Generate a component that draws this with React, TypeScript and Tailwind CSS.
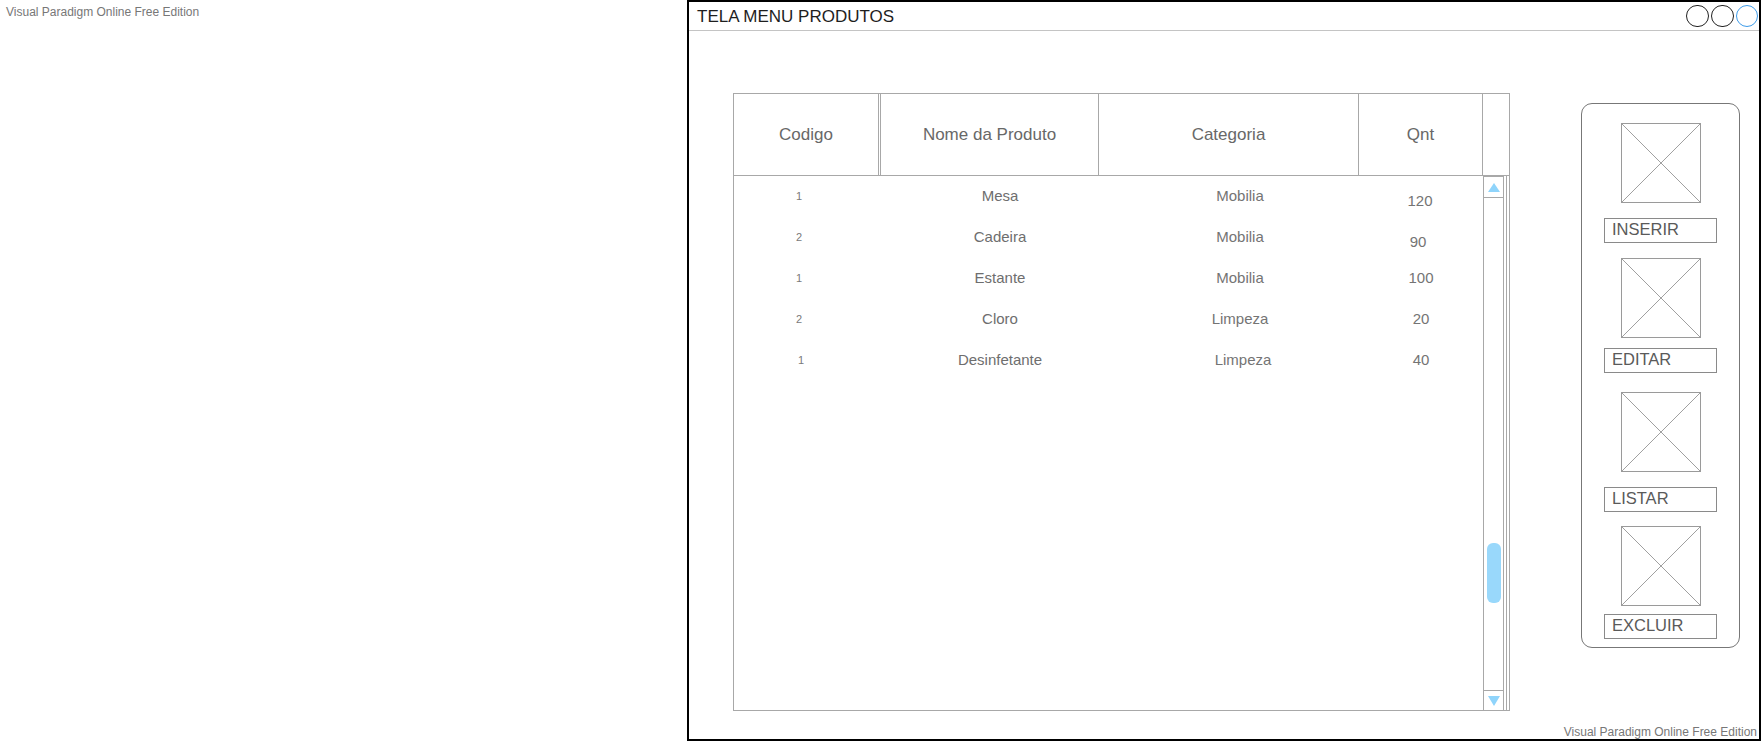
import React from "react";

type Row = {
  c: string;
  n: string;
  cat: string;
  q: string;
  qCls: string;
  cCls: string;
  catCls: string;
};

const rows: Row[] = [
  { c: "1", n: "Mesa", cat: "Mobilia", q: "120", qCls: "pt-[9px]", cCls: "", catCls: "" },
  { c: "2", n: "Cadeira", cat: "Mobilia", q: "90", qCls: "pt-[9px] pr-[4px]", cCls: "", catCls: "" },
  { c: "1", n: "Estante", cat: "Mobilia", q: "100", qCls: "pl-[2px]", cCls: "", catCls: "" },
  { c: "2", n: "Cloro", cat: "Limpeza", q: "20", qCls: "pl-[2px]", cCls: "", catCls: "" },
  { c: "1", n: "Desinfetante", cat: "Limpeza", q: "40", qCls: "pl-[2px]", cCls: "pl-[4px]", catCls: "pl-[6px]" },
];

function Placeholder() {
  return (
    <div className="w-[80px] h-[80px] border border-[#9a9a9a] shrink-0">
      <svg width="78" height="78" viewBox="0 0 78 78" className="block">
        <line x1="0" y1="0" x2="78" y2="78" stroke="#a0a0a0" strokeWidth="1" />
        <line x1="78" y1="0" x2="0" y2="78" stroke="#a0a0a0" strokeWidth="1" />
      </svg>
    </div>
  );
}

function Label({ text, cls }: { text: string; cls: string }) {
  return (
    <div
      className={`w-[113px] h-[25px] border border-[#8a8a8a] pl-[7px] pb-[2px] flex items-center text-[16.5px] leading-none text-[#5a5a5a] ${cls}`}
    >
      {text}
    </div>
  );
}

export default function App() {
  return (
    <div className="w-[1762px] h-[742px] bg-white flex overflow-hidden font-['Liberation_Sans',Arial,sans-serif]">
      <div className="w-[687px] shrink-0 pl-[6px] pt-[4px] text-[12px] leading-[16px] text-[#777]">
        Visual Paradigm Online Free Edition
      </div>

      <div className="w-[1074px] h-[741px] shrink-0 border-2 border-black flex flex-col">
        {/* title bar */}
        <div className="h-[29px] shrink-0 border-b border-[#c4c4c4] flex items-center pl-[8px] pr-[1px]">
          <span className="text-[17px] leading-none text-[#1e1e1e]">TELA MENU PRODUTOS</span>
          <div className="ml-auto flex gap-[2px]">
            <div className="w-[23px] h-[22px] rounded-full border-[1.5px] border-[#222]" />
            <div className="w-[23px] h-[22px] rounded-full border-[1.5px] border-[#222]" />
            <div className="w-[22px] h-[22px] rounded-full border-[1.5px] border-[#3d9be9]" />
          </div>
        </div>

        {/* body */}
        <div className="flex items-start pl-[44px] pt-[62px]">
          {/* table */}
          <div className="w-[777px] shrink-0 border border-[#a8a8a8] flex flex-col">
            <div className="h-[82px] border-b border-[#a8a8a8] flex text-[17px] text-[#686868]">
              <div className="w-[145px] border-r border-[#a8a8a8] flex items-center justify-center">Codigo</div>
              <div className="w-[1px]" />
              <div className="w-[219px] border-x border-[#a8a8a8] flex items-center justify-center">Nome da Produto</div>
              <div className="w-[260px] border-r border-[#a8a8a8] flex items-center justify-center">Categoria</div>
              <div className="w-[124px] border-r border-[#a8a8a8] flex items-center justify-center">Qnt</div>
              <div className="flex-1" />
            </div>

            <div className="h-[534px] flex">
              <div className="w-[749px] flex flex-col">
                {rows.map((r, i) => (
                  <div key={i} className="h-[41px] flex items-stretch">
                    <div className={`w-[130px] flex items-center justify-center text-[11px] text-[#7a7a7a] ${r.cCls}`}>{r.c}</div>
                    <div className="w-[272px] flex items-center justify-center text-[15px] text-[#6e6e6e]">{r.n}</div>
                    <div className={`w-[208px] flex items-center justify-center text-[15px] text-[#747474] ${r.catCls}`}>{r.cat}</div>
                    <div className="w-[14px]" />
                    <div className={`w-[124px] flex items-center justify-center text-[15px] text-[#747474] ${r.qCls}`}>{r.q}</div>
                  </div>
                ))}
              </div>

              {/* scrollbar */}
              <div className="w-[21px] border-x border-[#a8a8a8] flex flex-col">
                <div className="h-[22px] border-y border-[#a8a8a8] flex items-center justify-center">
                  <svg width="12" height="9" viewBox="0 0 12 9">
                    <polygon points="6,0 12,9 0,9" fill="#8fd4fb" />
                  </svg>
                </div>
                <div className="flex-1 pt-[345px] flex flex-col items-center">
                  <div className="w-[14px] h-[60px] rounded-[6px] bg-[#99d8fb]" />
                </div>
                <div className="h-[20px] border-t border-[#a8a8a8] flex items-center justify-center">
                  <svg width="12" height="10" viewBox="0 0 12 10">
                    <polygon points="0,0 12,0 6,10" fill="#8fd4fb" />
                  </svg>
                </div>
              </div>
              <div className="w-[2px]" />
              <div className="w-[1px] bg-[#a8a8a8]" />
              <div className="w-[2px]" />
            </div>
          </div>

          {/* side panel */}
          <div className="ml-[71px] mt-[10px] w-[159px] h-[545px] shrink-0 border border-[#777] rounded-[11px] flex flex-col items-center pt-[19px]">
            <Placeholder />
            <Label text="INSERIR" cls="mt-[15px]" />
            <div className="mt-[15px]"><Placeholder /></div>
            <Label text="EDITAR" cls="mt-[10px]" />
            <div className="mt-[19px]"><Placeholder /></div>
            <Label text="LISTAR" cls="mt-[15px]" />
            <div className="mt-[14px]"><Placeholder /></div>
            <Label text="EXCLUIR" cls="mt-[8px]" />
          </div>
        </div>

        <div className="mt-auto text-right pr-[2px] pb-[0px] text-[12px] leading-[14px] text-[#777]">
          Visual Paradigm Online Free Edition
        </div>
      </div>
    </div>
  );
}
